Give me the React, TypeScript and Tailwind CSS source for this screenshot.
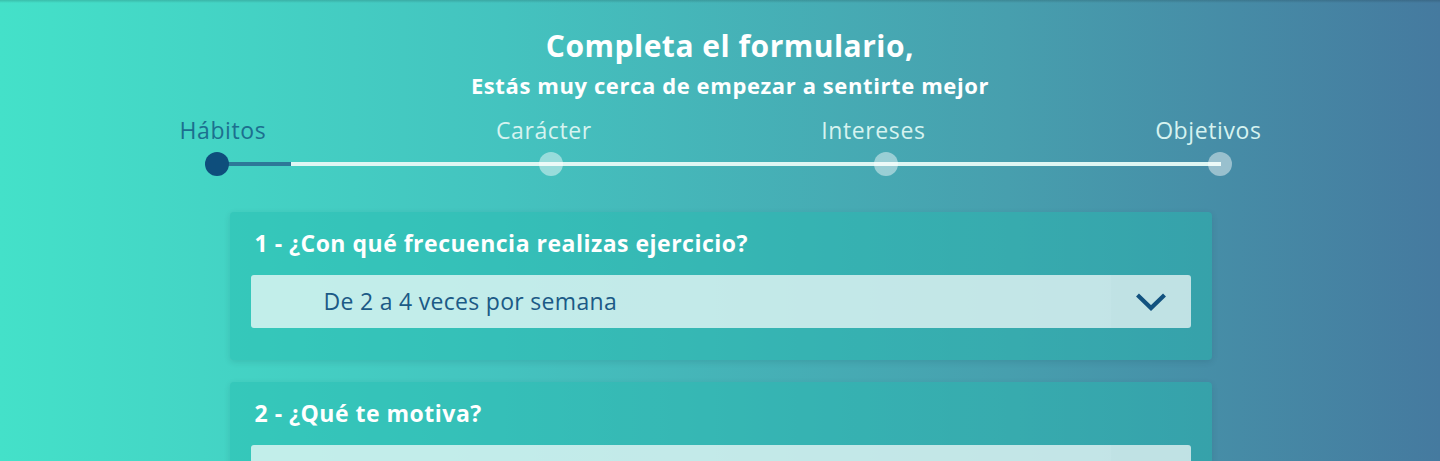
const steps = ['Hábitos', 'Carácter', 'Intereses', 'Objetivos']

function Chevron() {
  return (
    <svg width="32" height="20" viewBox="0 0 32 20" fill="none">
      <path d="M2.5 3 L16 16 L29.5 3" stroke="#12527f" strokeWidth="4.2" strokeLinecap="butt" strokeLinejoin="miter" />
    </svg>
  )
}

function Question({ title, value }: { title: string; value?: string }) {
  return (
    <div className="rounded-[4px] bg-[#24bab0]/45 px-[21px] pt-[16px] pb-[32px] shadow-[0_2px_6px_rgba(0,40,60,0.12)]">
      <h3 className="pl-[4px] text-[23px] font-bold leading-[30px] tracking-[0.5px] text-white">{title}</h3>
      <div className="mt-[17px] flex h-[53px] items-center justify-between rounded-[3px] bg-white/70 pl-[73px]">
        <span className="text-[23px] leading-none tracking-[0.3px] text-[#1b5a86]">{value}</span>
        <div className="flex h-full w-[80px] items-center justify-center rounded-r-[3px] bg-[#0f4f70]/[0.012]">
          <Chevron />
        </div>
      </div>
    </div>
  )
}

export default function App() {
  return (
    <div
      className="relative h-[461px] w-full overflow-hidden bg-[linear-gradient(90deg,#44e1c9_0%,#44c3bf_35%,#479fae_70%,#457a9f_100%)]"
      style={{ fontFamily: '"Open Sans", "Noto Sans", sans-serif' }}
    >
      <div className="absolute inset-x-0 top-0 h-[3px] bg-gradient-to-b from-black/15 to-transparent" />

      <div className="pt-[27px] pl-[20px] text-center text-white">
        <h1 className="text-[30px] font-bold leading-[38px] tracking-[0.5px]">Completa el formulario,</h1>
        <p className="mt-[6px] text-[22px] font-bold leading-[28px] tracking-[0.6px]">
          Estás muy cerca de empezar a sentirte mejor
        </p>
      </div>

      <div className="mx-auto mt-[16px] w-[1083px] pl-[1px]">
        <div className="flex justify-between text-[23px] leading-[30px] tracking-[0.6px]">
          {steps.map((s, i) => (
            <span key={s} className={i === 0 ? 'text-[#1c6f8f]' : 'text-[#d6f3f0]'}>
              {s}
            </span>
          ))}
        </div>
        <div className="relative ml-[25px] mt-[7px] h-[24px] w-[1028px]">
          <div className="absolute left-[12px] right-[12px] top-[10px] h-[4px] bg-[#dff6f3]" />
          <div className="absolute left-[12px] top-[10px] h-[4px] w-[74px] bg-[#2d7898]" />
          <div className="relative flex justify-between">
            {steps.map((s, i) => (
              <div
                key={s}
                className={
                  i === 0
                    ? 'h-[24px] w-[24px] rounded-full bg-[#0e4e7c]'
                    : 'h-[24px] w-[24px] rounded-full bg-white/45'
                }
              />
            ))}
          </div>
        </div>
      </div>

      <div className="mx-auto mt-[36px] flex w-[983px] flex-col gap-[22px] pl-[1px]">
        <Question title="1 - ¿Con qué frecuencia realizas ejercicio?" value="De 2 a 4 veces por semana" />
        <Question title="2 - ¿Qué te motiva?" />
      </div>
    </div>
  )
}
